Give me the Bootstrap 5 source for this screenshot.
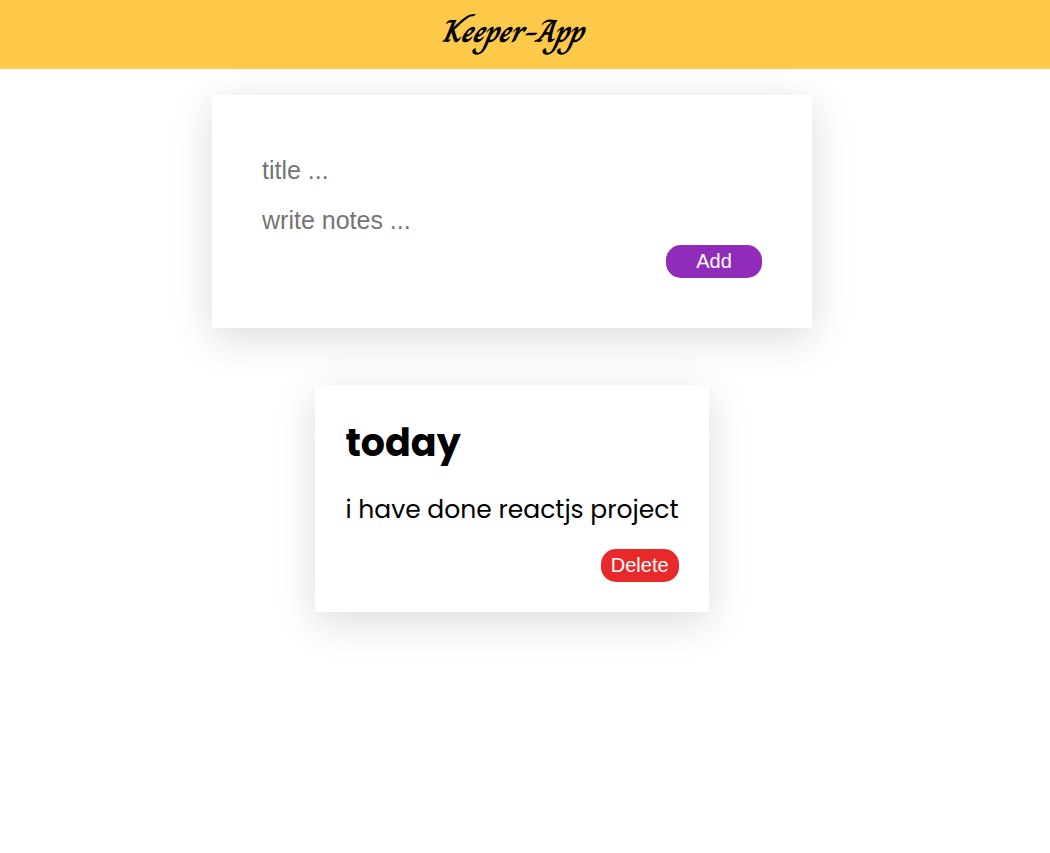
<!DOCTYPE html>
<html lang="en">
<head>
<meta charset="utf-8">
<meta name="viewport" content="width=device-width, initial-scale=1">
<title>Keeper-App</title>
<link rel="stylesheet" href="https://cdn.jsdelivr.net/npm/bootstrap@5.3.0/dist/css/bootstrap.min.css">
<style>
body { color: #000; font-family: Poppins, "Open Sans", sans-serif; }
.page-inner { padding-right: 26px; }
.site-header { background: #ffc94a; padding-bottom: 7px; }
.brand-title { font-family: Charm, Kalam, "Liberation Serif", cursive; font-style: italic; font-weight: 700; font-size: 32px; line-height: 62px; }
.sheet { background: #fff; box-shadow: 0 10px 40px rgba(0, 0, 0, .14); }
.note-form { width: 100%; max-width: 600px; padding: 50px; margin-top: 26px; }
.note-field { font: 25px/30px "Liberation Sans", Arial, sans-serif; height: 50px; border: 0; padding: 1px 0 0; width: 100%; outline: 0; }
.note-field::placeholder { color: #757575; opacity: 1; }
.pill { font: 20px/23px "Liberation Sans", Arial, sans-serif; color: #fff; border: 0; border-radius: 15px; padding: 5px 10px; }
.pill-add { background: #902bba; width: 96px; }
.pill-delete { background: #e92929; }
.note { margin-top: 57px; padding: 30px; }
.note-title { font-size: 38px; line-height: 56px; }
.note-text { font-size: 25px; line-height: 38px; margin: 20px 0; }
</style>
</head>
<body class="min-vh-100">
<header class="site-header page-inner text-center">
<h1 class="brand-title m-0">Keeper-App</h1>
</header>
<main class="page-inner d-flex flex-column align-items-center pb-5">
<form class="sheet note-form">
<input class="note-field d-block" type="text" aria-label="Title" placeholder="title ...">
<input class="note-field d-block" type="text" aria-label="Note" placeholder="write notes ...">
<div class="d-flex justify-content-end"><button class="pill pill-add" type="button">Add</button></div>
</form>
<article class="sheet note">
<h2 class="note-title fw-bold m-0">today</h2>
<p class="note-text">i have done reactjs project</p>
<div class="d-flex justify-content-end"><button class="pill pill-delete" type="button">Delete</button></div>
</article>
</main>
<script src="https://cdn.jsdelivr.net/npm/bootstrap@5.3.0/dist/js/bootstrap.bundle.min.js"></script>
</body>
</html>
